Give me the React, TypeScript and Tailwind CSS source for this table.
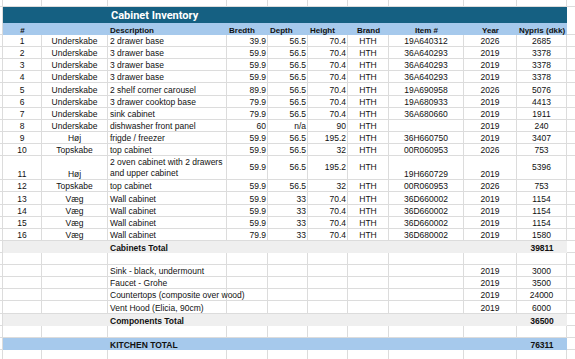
import React from "react";

type Variant = "top" | "title" | "header" | "plain" | "gray" | "blue";
type A = "l" | "c" | "r";

const COLS =
  "grid grid-cols-[3px_39px_66px_119px_41px_40px_40px_41px_75px_53px_50px_1fr] overflow-visible";

const JUST: Record<A, string> = {
  l: "justify-start pl-[2px]",
  c: "justify-center",
  r: "justify-end pr-[1px]",
};

const DATA_ALIGN: A[] = ["c", "c", "c", "l", "r", "r", "r", "c", "c", "c", "c", "c"];
const HEAD_ALIGN: A[] = ["c", "c", "c", "l", "l", "l", "l", "c", "c", "c", "c", "c"];

function cellBox(v: Variant, i: number): string {
  if (i === 0) return "bg-white border-r border-b border-[#dcdcdc]";
  if (i === 11) return "bg-white border-b border-[#dcdcdc]";
  switch (v) {
    case "title":
      return "bg-[#156082]";
    case "header":
      return "bg-[#a6c9ec]";
    case "blue":
      return "bg-[#a6c9ec]";
    case "gray":
      return "bg-[#efefef]";
    default:
      return "bg-white border-r border-b border-[#dcdcdc]";
  }
}

function Row({
  v,
  cells,
  h,
  bold = false,
  align = DATA_ALIGN,
  centerCols = [],
  size = "text-[8.5px]",
}: {
  v: Variant;
  cells: string[];
  h: string;
  bold?: boolean;
  align?: A[];
  centerCols?: number[];
  size?: string;
}) {
  return (
    <div className={`${COLS} ${h}`}>
      {Array.from({ length: 12 }).map((_, i) => {
        const t = cells[i] ?? "";
        const vAlign = centerCols.includes(i) ? "items-center" : "items-end";
        const lines = t.split("\n");
        return (
          <div
            key={i}
            className={`flex min-w-0 min-h-0 h-full ${vAlign} ${JUST[align[i]]} ${cellBox(v, i)} ${
              bold ? "font-bold" : "font-normal"
            } whitespace-nowrap overflow-visible leading-[9px] ${size} text-[#111]`}
          >
            {lines.length > 1 ? (
              <div className="flex flex-col leading-[11px] relative z-10">
                {lines.map((l, k) => (
                  <span key={k}>{l}</span>
                ))}
              </div>
            ) : (
              <span className="relative z-10">{t}</span>
            )}
          </div>
        );
      })}
    </div>
  );
}

const items: string[][] = [
  ["1", "Underskabe", "2 drawer base", "39.9", "56.5", "70.4", "HTH", "19A640312", "2026", "2685"],
  ["2", "Underskabe", "3 drawer base", "59.9", "56.5", "70.4", "HTH", "36A640293", "2019", "3378"],
  ["3", "Underskabe", "3 drawer base", "59.9", "56.5", "70.4", "HTH", "36A640293", "2019", "3378"],
  ["4", "Underskabe", "3 drawer base", "59.9", "56.5", "70.4", "HTH", "36A640293", "2019", "3378"],
  ["5", "Underskabe", "2 shelf corner carousel", "89.9", "56.5", "70.4", "HTH", "19A690958", "2026", "5076"],
  ["6", "Underskabe", "3 drawer cooktop base", "79.9", "56.5", "70.4", "HTH", "19A680933", "2019", "4413"],
  ["7", "Underskabe", "sink cabinet", "79.9", "56.5", "70.4", "HTH", "36A680660", "2019", "1911"],
  ["8", "Underskabe", "dishwasher front panel", "60", "n/a", "90", "HTH", "", "2019", "240"],
  ["9", "Høj", "frigde / freezer", "59.9", "56.5", "195.2", "HTH", "36H660750", "2019", "3407"],
  ["10", "Topskabe", "top cabinet", "59.9", "56.5", "32", "HTH", "00R060953", "2026", "753"],
];

const items2: string[][] = [
  ["12", "Topskabe", "top cabinet", "59.9", "56.5", "32", "HTH", "00R060953", "2026", "753"],
  ["13", "Væg", "Wall cabinet", "59.9", "33", "70.4", "HTH", "36D660002", "2019", "1154"],
  ["14", "Væg", "Wall cabinet", "59.9", "33", "70.4", "HTH", "36D660002", "2019", "1154"],
  ["15", "Væg", "Wall cabinet", "59.9", "33", "70.4", "HTH", "36D660002", "2019", "1154"],
  ["16", "Væg", "Wall cabinet", "79.9", "33", "70.4", "HTH", "36D680002", "2019", "1580"],
];

const components: [string, string, string][] = [
  ["Sink - black, undermount", "2019", "3000"],
  ["Faucet - Grohe", "2019", "3500"],
  ["Countertops (composite over wood)", "2019", "24000"],
  ["Vent Hood (Elicia, 90cm)", "2019", "6000"],
];

const R = "h-[12.12px]";

export default function App() {
  return (
    <div className="w-[575px] h-[359px] overflow-hidden bg-white font-['Liberation_Sans',Arial,sans-serif]">
      <Row v="top" cells={[]} h="h-[7px]" />
      {/* title */}
      <div className={`${COLS} h-[16px]`}>
        {Array.from({ length: 12 }).map((_, i) => (
          <div key={i} className={`flex items-center ${cellBox("title", i)} whitespace-nowrap overflow-visible`}>
            {i === 3 && (
              <span className="relative z-10 pl-[3px] pt-[1px] text-[11px] font-bold text-white font-['Roboto',Arial,sans-serif]">
                Cabinet Inventory
              </span>
            )}
          </div>
        ))}
      </div>
      <Row
        v="header"
        h="h-[12px]"
        bold
        size="text-[8px]"
        align={HEAD_ALIGN}
        cells={["", "#", "", "Description", "Bredth", "Depth", "Height", "Brand", "Item #", "Year", "Nypris (dkk)"]}
      />
      {items.map((r, k) => (
        <Row key={k} v="plain" h={R} cells={["", ...r]} />
      ))}
      <Row
        v="plain"
        h="h-[24.24px]"
        cells={["", "11", "Høj", "2 oven cabinet with 2 drawers\nand upper cabinet", "59.9", "56.5", "195.2", "HTH", "19H660729", "2019", "5396"]}
        centerCols={[4, 5, 6, 7, 10]}
      />
      {items2.map((r, k) => (
        <Row key={k} v="plain" h={R} cells={["", ...r]} />
      ))}
      <Row v="gray" h={R} bold cells={["", "", "", "Cabinets Total", "", "", "", "", "", "", "39811"]} />
      <Row v="plain" h={R} cells={[]} />
      {components.map(([d, y, p], k) => (
        <Row key={k} v="plain" h={R} cells={["", "", "", d, "", "", "", "", "", y, p]} />
      ))}
      <Row v="gray" h={R} bold cells={["", "", "", "Components Total", "", "", "", "", "", "", "36500"]} />
      <Row v="plain" h={R} cells={[]} />
      <Row v="blue" h={R} bold cells={["", "", "", "KITCHEN TOTAL", "", "", "", "", "", "", "76311"]} />
      <Row v="plain" h={R} cells={[]} />
    </div>
  );
}
